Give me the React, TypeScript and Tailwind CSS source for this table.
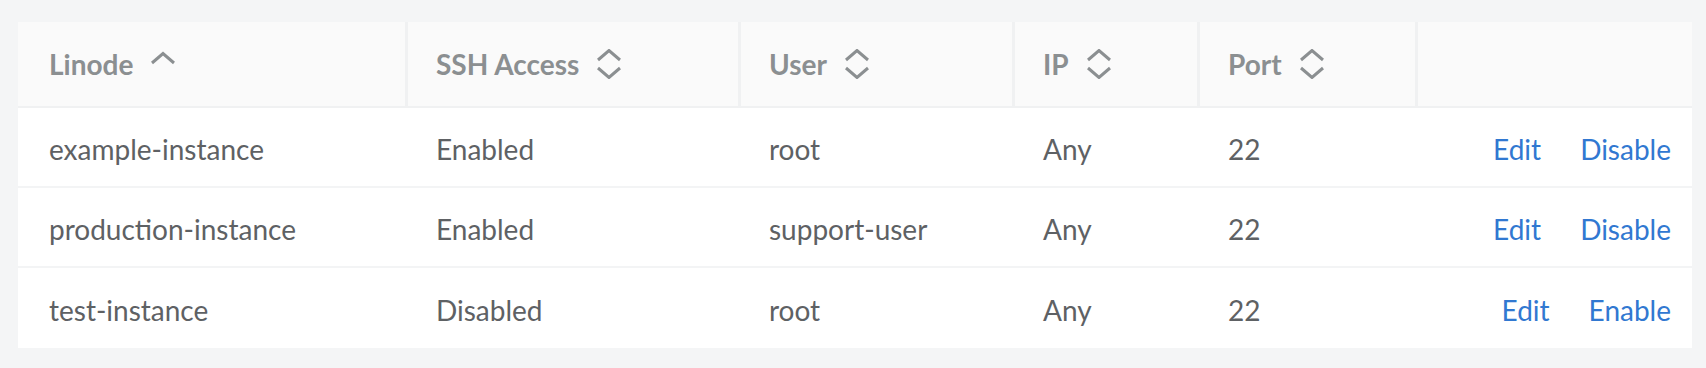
const columns = [
  { label: "Linode", sort: "asc" },
  { label: "SSH Access", sort: "none" },
  { label: "User", sort: "none" },
  { label: "IP", sort: "none" },
  { label: "Port", sort: "none" },
];

const rows = [
  { name: "example-instance", access: "Enabled", user: "root", ip: "Any", port: "22", action: "Disable" },
  { name: "production-instance", access: "Enabled", user: "support-user", ip: "Any", port: "22", action: "Disable" },
  { name: "test-instance", access: "Disabled", user: "root", ip: "Any", port: "22", action: "Enable" },
];

const SortIcon = ({ sort }: { sort: string }) => {
  if (sort === "asc") {
    return (
      <svg width="26" height="30" viewBox="0 0 26 30" className="ml-[17px] text-[#8b8f91]">
        <path d="M2 14 L13 4.5 L24 14" fill="none" stroke="currentColor" strokeWidth="3" />
      </svg>
    );
  }
  return (
    <svg width="26" height="30" viewBox="0 0 26 30" className="ml-[17px] text-[#8b8f91]">
      <path d="M2 11 L13 1.5 L24 11" fill="none" stroke="currentColor" strokeWidth="3" />
      <path d="M2 19 L13 28.5 L24 19" fill="none" stroke="currentColor" strokeWidth="3" />
    </svg>
  );
};

const grid = "grid grid-cols-[387px_333px_274px_185px_218px_1fr]";

export default function App() {
  return (
    <div className="min-h-screen bg-[#f4f5f6] pt-[22px] pl-[18px] pr-[14px] pb-[20px] font-['Lato',sans-serif]">
      <div className="bg-white">
        {/* Header */}
        <div className={`${grid} h-[86px] bg-[#fafafa] border-b-2 border-[#f0f1f2]`}>
          {columns.map((col, i) => (
            <div
              key={col.label}
              className={`flex items-center text-[28px] font-bold text-[#8b8f91] ${
                i > 0 ? "border-l-[3px] border-[#f0f1f2] pl-[28px]" : "pl-[31px]"
              }`}
            >
              <span>{col.label}</span>
              <SortIcon sort={col.sort} />
            </div>
          ))}
          <div className="border-l-[3px] border-[#f0f1f2]"></div>
        </div>

        {/* Rows */}
        {rows.map((row, idx) => (
          <div
            key={row.name}
            className={`${grid} h-[80px] pt-[4px] text-[28px] text-[#5e6164] ${
              idx < rows.length - 1 ? "border-b-2 border-[#f3f4f5]" : ""
            }`}
          >
            <div className="flex items-center pl-[31px]">{row.name}</div>
            <div className="flex items-center pl-[31px]">{row.access}</div>
            <div className="flex items-center pl-[31px]">{row.user}</div>
            <div className="flex items-center pl-[31px]">{row.ip}</div>
            <div className="flex items-center pl-[31px]">{row.port}</div>
            <div className="flex items-center justify-end gap-[39px] pr-[21px] text-[#3178d1]">
              <span>Edit</span>
              <span>{row.action}</span>
            </div>
          </div>
        ))}
      </div>
    </div>
  );
}
